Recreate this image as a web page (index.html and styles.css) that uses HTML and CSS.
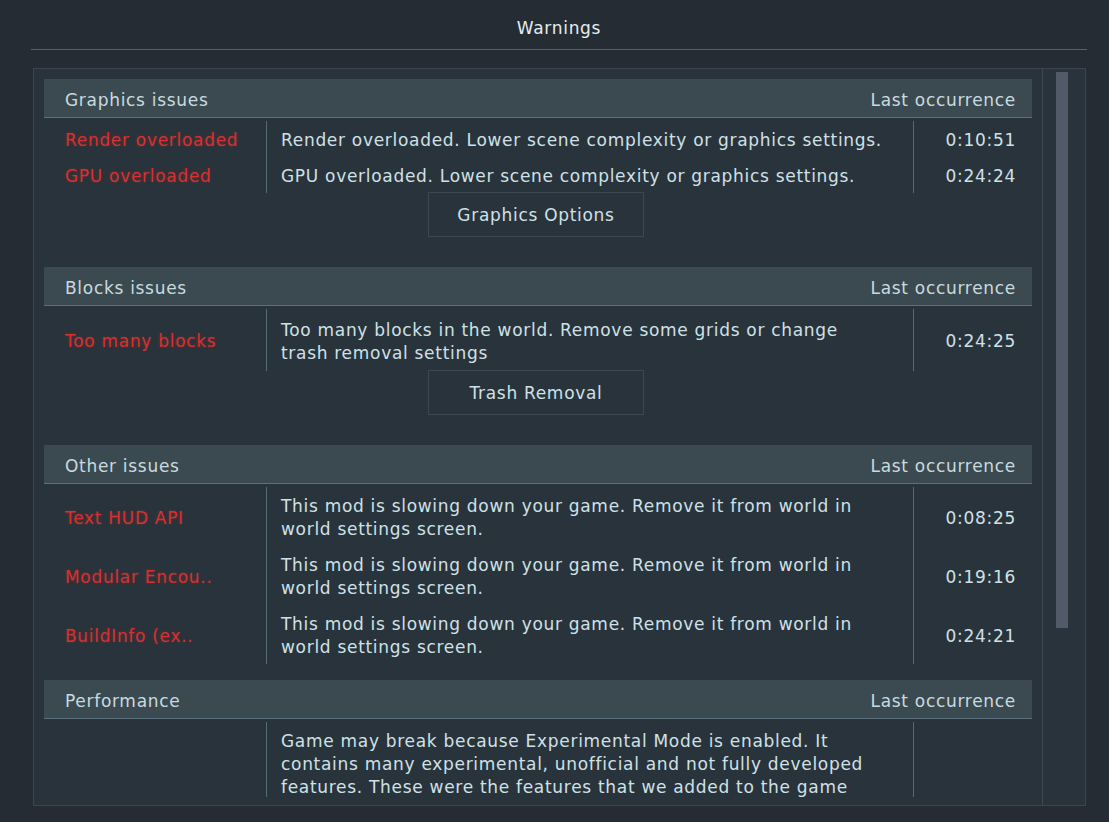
FILE: index.html
```html
<!DOCTYPE html>
<html lang="en">

<head>
    <meta charset="UTF-8">
    <meta name="viewport" content="width=device-width, initial-scale=1.0">
    <title>Warnings</title>
    <link rel="stylesheet" href="styles.css">
</head>

<body>
    <div class="screen">
        <h1 class="title">Warnings</h1>

        <div class="panel">
            <div class="scroll">

                <section class="group">
                    <div class="group-head">
                        <span>Graphics issues</span>
                        <span>Last occurrence</span>
                    </div>
                    <div class="issues">
                        <div class="name">Render overloaded</div>
                        <div class="desc">Render overloaded. Lower scene complexity or graphics settings.</div>
                        <div class="time">0:10:51</div>

                        <div class="name">GPU overloaded</div>
                        <div class="desc">GPU overloaded. Lower scene complexity or graphics settings.</div>
                        <div class="time">0:24:24</div>
                    </div>
                    <button class="action">Graphics Options</button>
                </section>

                <section class="group">
                    <div class="group-head">
                        <span>Blocks issues</span>
                        <span>Last occurrence</span>
                    </div>
                    <div class="issues">
                        <div class="name">Too many blocks</div>
                        <div class="desc tall">Too many blocks in the world. Remove some grids or change trash removal settings</div>
                        <div class="time">0:24:25</div>
                    </div>
                    <button class="action">Trash Removal</button>
                </section>

                <section class="group no-action">
                    <div class="group-head">
                        <span>Other issues</span>
                        <span>Last occurrence</span>
                    </div>
                    <div class="issues">
                        <div class="name">Text HUD API</div>
                        <div class="desc">This mod is slowing down your game. Remove it from world in world settings screen.</div>
                        <div class="time">0:08:25</div>

                        <div class="name">Modular Encou..</div>
                        <div class="desc">This mod is slowing down your game. Remove it from world in world settings screen.</div>
                        <div class="time">0:19:16</div>

                        <div class="name">BuildInfo (ex..</div>
                        <div class="desc">This mod is slowing down your game. Remove it from world in world settings screen.</div>
                        <div class="time">0:24:21</div>
                    </div>
                </section>

                <section class="group">
                    <div class="group-head">
                        <span>Performance</span>
                        <span>Last occurrence</span>
                    </div>
                    <div class="issues">
                        <div class="name"></div>
                        <div class="desc">Game may break because Experimental Mode is enabled. It contains many experimental, unofficial and not fully developed features. These were the features that we added to the game before they were finished and tested.</div>
                        <div class="time"></div>
                    </div>
                </section>

            </div>
            <div class="scrollbar">
                <div class="thumb"></div>
            </div>
        </div>
    </div>
</body>

</html>
```

FILE: styles.css
```css
* {
    box-sizing: border-box;
}

body {
    margin: 0;
    background: #252c34;
    color: #cfe1e7;
    font-family: "DejaVu Sans", sans-serif;
    font-size: 17px;
    letter-spacing: 0.7px;
}

.screen {
    height: 822px;
    padding: 0 22px 0 31px;
    display: flex;
    flex-direction: column;
}

.title {
    margin: 0;
    height: 50px;
    padding-top: 18px;
    font-size: 17px;
    font-weight: normal;
    text-align: center;
    color: #e4edf0;
    border-bottom: 1px solid #4f626e;
}

.panel {
    margin: 18px 0 0 2px;
    width: 1053px;
    height: 738px;
    display: flex;
    background: #29333b;
    border: 1px solid #3a4550;
}

.scroll {
    flex: 1;
    margin: 10px 10px 8px 10px;
    overflow: hidden;
}

.scrollbar {
    width: 43px;
    border-left: 1px solid #3d4853;
    padding: 3px 0 0 13px;
}

.thumb {
    width: 12px;
    height: 556px;
    background: #525a6a;
}

/* one block of issues with its header */
.group {
    display: flex;
    flex-direction: column;
    margin-bottom: 30px;
}

.group.no-action {
    margin-bottom: 16px;
}

.group-head {
    display: flex;
    justify-content: space-between;
    height: 39px;
    align-items: center;
    padding: 4px 16px 0 21px;
    background: #3b4a51;
    border-bottom: 1px solid #5b6f7d;
    color: #c9dadf;
}

.issues {
    display: grid;
    grid-template-columns: 222px 648px 1fr;
    margin-top: 3px;
}

.name,
.time {
    display: flex;
    align-items: center;
    padding-top: 2px;
}

.name {
    padding-left: 21px;
    color: #d8302f;
    text-shadow: 0 0 3px rgba(216, 48, 47, 0.35);
    white-space: nowrap;
}

.time {
    justify-content: flex-end;
    padding-right: 16px;
}

.desc {
    border-left: 1px solid #566b78;
    border-right: 1px solid #566b78;
    padding: 8px 30px 5px 14px;
    line-height: 23px;
}

.desc.tall {
    padding: 10px 30px 6px 14px;
}

.action {
    align-self: center;
    width: 216px;
    height: 45px;
    margin: -1px 0 0 -4px;
    background: transparent;
    border: 1px solid #3a4853;
    color: #cfe1e7;
    font-family: inherit;
    font-size: 17px;
    letter-spacing: 0.7px;
}
```
